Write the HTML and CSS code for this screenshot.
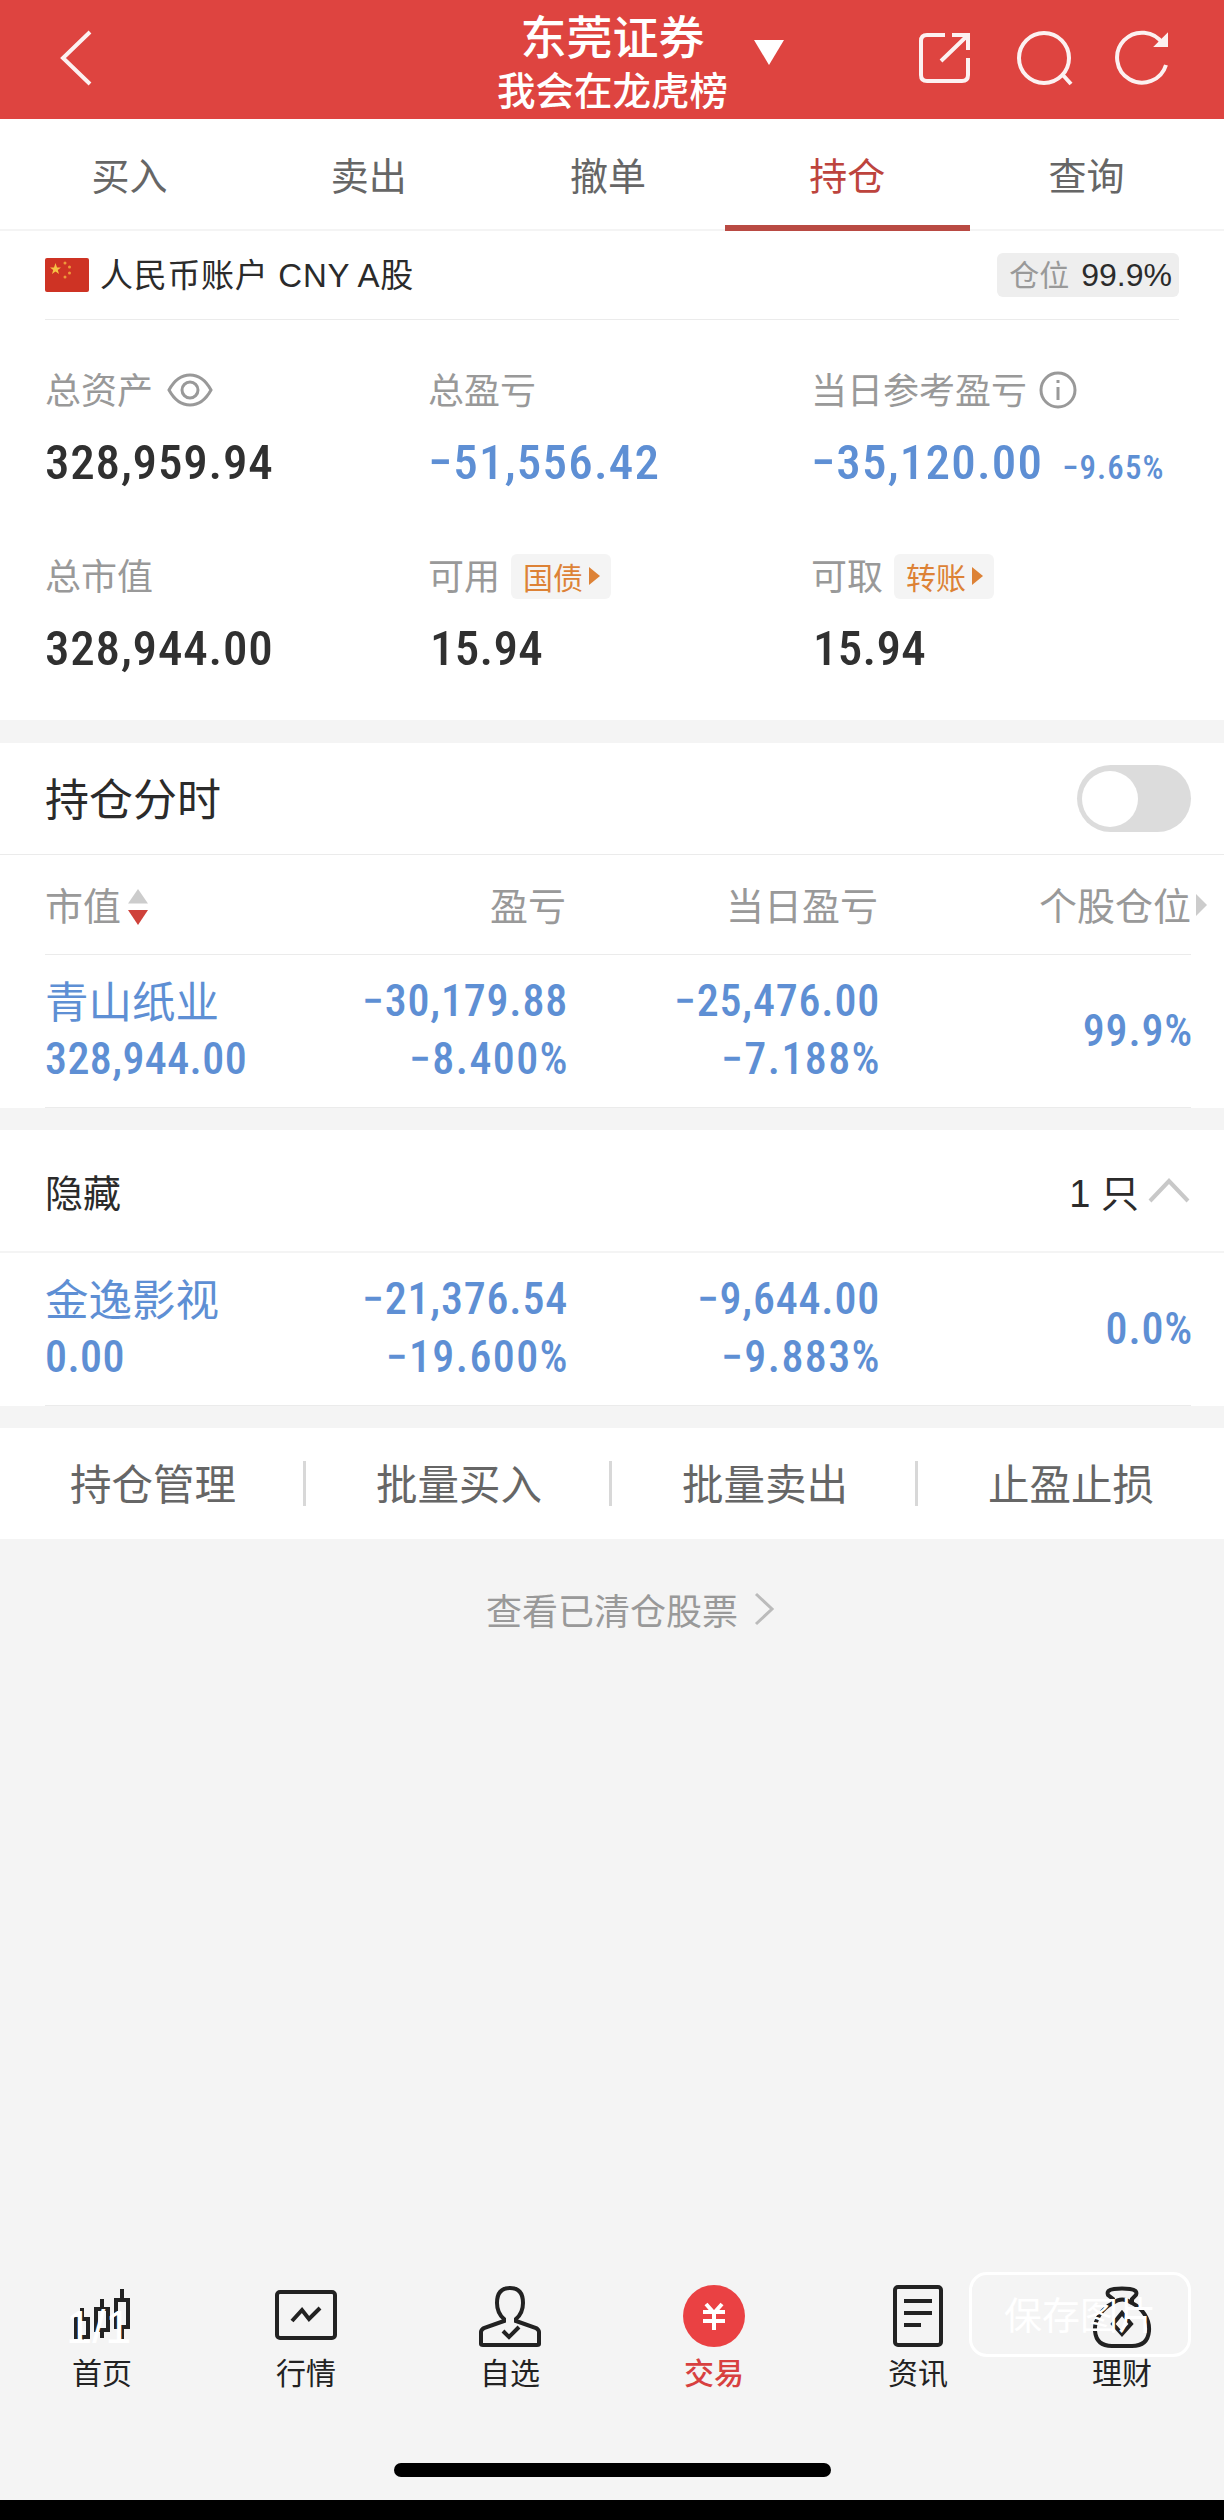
FILE: index.html
```html
<!DOCTYPE html>
<html lang="zh-CN">
<head>
  <meta charset="UTF-8">
  <meta name="viewport" content="width=device-width, initial-scale=1.0">
  <title>持仓 - 东莞证券</title>
  <link rel="stylesheet" href="styles.css">
</head>
<body>
  <header class="header">
    <svg class="back" width="32" height="58" viewBox="0 0 32 58"><path d="M30 3L3 29L30 55"/></svg>
    <div class="title">
      <h1>东莞证券</h1>
      <p>我会在龙虎榜</p>
    </div>
    <svg class="caret" width="36" height="30" viewBox="0 0 36 30"><path d="M3 2H33L18 27Z"/></svg>
    <div class="header-icons">
      <svg width="56" height="56" viewBox="0 0 56 56"><path d="M28 5H10Q4 5 4 11V45Q4 51 10 51H45Q51 51 51 45V28M35 5H51V20M51 5L24 31"/></svg>
      <svg width="60" height="60" viewBox="0 0 60 60"><circle cx="29" cy="30" r="25"/><path d="M47 46L56 56"/></svg>
      <svg width="56" height="60" viewBox="0 0 56 60"><path d="M51 37A25 25 0 1 1 48 16"/><path class="solid" d="M51 9V17H43Z"/></svg>
    </div>
  </header>

  <nav class="tabs">
    <a>买入</a>
    <a>卖出</a>
    <a>撤单</a>
    <a class="active">持仓</a>
    <a>查询</a>
  </nav>

  <section class="account">
    <div class="account-row">
      <svg class="flag" width="44" height="34" viewBox="0 0 44 34">
        <rect width="44" height="34" rx="2" fill="#ce3324"/>
        <path fill="#f6c244" d="M10.500 5L12 9.500H16L12.800 12L14 16L10.500 13.500L7 16L8.200 12L5 9.500H9Z"/>
        <g fill="#ee9a3a"><circle cx="20" cy="5" r="1.500"/><circle cx="24.500" cy="9" r="1.500"/><circle cx="24.500" cy="15" r="1.500"/><circle cx="20" cy="19" r="1.500"/></g>
      </svg>
      <span class="account-name">人民币账户 CNY A股</span>
      <span class="position"><em>仓位</em>99.9%</span>
    </div>

    <div class="summary">
      <div class="item">
        <div class="label"><span>总资产</span>
          <svg class="eye" width="46" height="36" viewBox="0 0 46 36"><path d="M2 18C8 7 15 3 23 3S38 7 44 18C38 29 31 33 23 33S8 29 2 18Z"/><circle cx="23" cy="18" r="8"/></svg>
        </div>
        <div class="value">328,959.94</div>
      </div>
      <div class="item">
        <div class="label"><span>总盈亏</span></div>
        <div class="value down">−51,556.42</div>
      </div>
      <div class="item">
        <div class="label"><span>当日参考盈亏</span>
          <svg class="info" width="38" height="38" viewBox="0 0 38 38"><circle cx="19" cy="19" r="17"/><path d="M19 16V29M19 9V12"/></svg>
        </div>
        <div class="value down">−35,120.00<small>−9.65%</small></div>
      </div>
      <div class="item">
        <div class="label"><span>总市值</span></div>
        <div class="value">328,944.00</div>
      </div>
      <div class="item">
        <div class="label"><span>可用</span><span class="tag">国债<i></i></span></div>
        <div class="value short">15.94</div>
      </div>
      <div class="item">
        <div class="label"><span>可取</span><span class="tag">转账<i></i></span></div>
        <div class="value short">15.94</div>
      </div>
    </div>
  </section>

  <section class="holdings">
    <div class="trend">
      <h2>持仓分时</h2>
      <span class="switch"></span>
    </div>
    <div class="row thead">
      <div>市值<svg class="sort" width="20" height="36" viewBox="0 0 20 36"><path fill="#ccc" d="M10 0L20 14.500H0Z"/><path fill="#cf423b" d="M0 21H20L10 36Z"/></svg></div>
      <div>盈亏</div>
      <div>当日盈亏</div>
      <div>个股仓位<i class="more"></i></div>
    </div>
    <div class="row stock">
      <div><b>青山纸业</b><span>328,944.00</span></div>
      <div><span>−30,179.88</span><span>−8.400%</span></div>
      <div><span>−25,476.00</span><span>−7.188%</span></div>
      <div><span>99.9%</span></div>
    </div>
  </section>

  <section class="hidden-list">
    <div class="hidden-head">
      <h3>隐藏</h3>
      <span class="count">1 只</span>
      <svg width="42" height="26" viewBox="0 0 42 26"><path d="M2 23L21 3L40 23"/></svg>
    </div>
    <div class="row stock">
      <div><b>金逸影视</b><span>0.00</span></div>
      <div><span>−21,376.54</span><span>−19.600%</span></div>
      <div><span>−9,644.00</span><span>−9.883%</span></div>
      <div><span>0.0%</span></div>
    </div>
  </section>

  <div class="actions">
    <a>持仓管理</a>
    <a>批量买入</a>
    <a>批量卖出</a>
    <a>止盈止损</a>
  </div>

  <a class="cleared">查看已清仓股票
    <svg width="22" height="34" viewBox="0 0 22 34"><path d="M3 2L19 17L3 32"/></svg>
  </a>

  <footer class="tabbar">
    <a>
      <svg width="64" height="64" viewBox="0 0 64 64"><path d="M12 24V35M12 53V59M6 35H18V53H6ZM32 15V25M32 46V54M26 25H38V46H26ZM52 5V16M52 43V55M46 16H58V43H46Z"/></svg>
      首页
    </a>
    <a>
      <svg width="64" height="64" viewBox="0 0 64 64"><rect x="3" y="8" width="58" height="46" rx="3"/><path d="M18 37L28 26L35 35L46 24"/></svg>
      行情
    </a>
    <a>
      <svg width="64" height="64" viewBox="0 0 64 64"><path d="M26 35Q19 29 19 19Q19 4 32 4T45 19Q45 29 38 35V37L58 44Q61 46 61 48V60Q61 61 59 61H5Q3 61 3 60V48Q3 46 6 44L26 37ZM25 47L31 53L41 43"/></svg>
      自选
    </a>
    <a class="active">
      <svg width="64" height="64" viewBox="0 0 64 64"><circle cx="32" cy="32" r="31"/><path d="M24 20L32 29L40 20M21 28H43M21 37H43M32 28V46"/></svg>
      交易
    </a>
    <a>
      <svg width="64" height="64" viewBox="0 0 64 64"><rect x="9" y="3" width="46" height="58" rx="3"/><path d="M18 17H46M18 29H46M18 41H35"/></svg>
      资讯
    </a>
    <a>
      <svg width="64" height="64" viewBox="0 0 64 64"><path d="M23 19V15L18 11Q16 6 24 5Q32 4 40 5Q48 6 46 11L42 15V19M23 19Q32 12 42 19C52 24 60 35 59 47C58 58 51 62 42 62H22C13 62 6 58 5 47C4 35 13 24 23 19ZM32 29L41 40L32 50L23 40Z"/></svg>
      理财
    </a>
    <span class="page-no">1/1</span>
    <button class="save">保存图片</button>
  </footer>
  <div class="home-bar"></div>
</body>
</html>
```
FILE: styles.css
```css
* {
  box-sizing: border-box;
}
body {
  margin: 0;
  width: 1224px;
  height: 2520px;
  display: flex;
  flex-direction: column;
  background: #f4f4f4;
  border-bottom: 20px solid #000;
  font-family: 'Liberation Sans', 'Noto Sans CJK SC', sans-serif;
  color: #2b2b2b;
}
h1, h2, h3, p {
  margin: 0;
  font-weight: 400;
}
svg {
  display: block;
  flex: none;
  fill: none;
}

/* header */
.header {
  height: 119px;
  flex: none;
  display: grid;
  grid-template-columns: 497px 231px 1fr auto;
  align-items: center;
  background: #de4440;
  color: #fff;
}
.header svg {
  stroke: #fff;
  stroke-width: 4;
  opacity: 0.93;
}
.header .back {
  margin: -4px 0 0 60px;
}
.title {
  text-align: center;
  white-space: nowrap;
}
.title h1 {
  font-size: 46px;
  line-height: 58px;
  font-weight: 500;
  padding-top: 6px;
}
.title p {
  font-size: 38.5px;
  line-height: 50px;
  font-weight: 500;
}
.header .caret {
  fill: #fff;
  stroke: none;
  opacity: 1;
  margin: -14px 0 0 23px;
}
.header-icons {
  display: flex;
  align-items: center;
  gap: 42px;
  padding: 0 53px 3px 0;
}
.header-icons svg:last-child {
  margin-left: -2px;
}
.header-icons .solid {
  fill: #fff;
}

/* trade tabs */
.tabs {
  height: 112px;
  flex: none;
  display: flex;
  padding: 0 18px 0 10px;
  background: #fff;
  border-bottom: 2px solid #f4f4f4;
}
.tabs a {
  flex: 1;
  position: relative;
  font-size: 38px;
  line-height: 116px;
  text-align: center;
  color: #666;
}
.tabs .active {
  color: #bd443d;
}
.tabs .active::after {
  content: '';
  position: absolute;
  left: -3px;
  right: -3px;
  bottom: -2px;
  height: 6px;
  background: #b94a43;
}

/* account */
.account {
  height: 489px;
  flex: none;
  padding: 0 45px;
  background: #fff;
}
.account-row {
  height: 89px;
  display: flex;
  align-items: center;
  border-bottom: 1px solid #ebebeb;
}
.account-name {
  font-size: 33px;
  letter-spacing: 0.7px;
  margin: -4px 0 0 11px;
}
.position {
  margin-left: auto;
  height: 44px;
  padding: 0 7px 0 12px;
  border-radius: 6px;
  background: #eee;
  font-size: 32px;
  line-height: 44px;
}
.position em {
  font-style: normal;
  font-size: 30px;
  color: #999;
  margin-right: 12px;
}
.summary {
  display: grid;
  grid-template-columns: 383px 383px 1fr;
  grid-auto-rows: 186px;
  padding-top: 44px;
}
.item {
  white-space: nowrap;
}
.label {
  display: flex;
  align-items: center;
  height: 52px;
  font-size: 36px;
  color: #999;
}
.label span:first-child {
  margin-top: -4px;
}
.label svg {
  stroke: #999;
  stroke-width: 3;
}
.label .eye {
  margin-left: 14px;
}
.label .info {
  margin-left: 12px;
}
.value {
  font-family: Roboto, sans-serif;
  font-weight: 550;
  font-stretch: 87%;
  font-size: 49px;
  line-height: 60px;
  letter-spacing: 0.8px;
  margin-top: 17px;
  color: #303030;
}
.value.short {
  padding-left: 2px;
  letter-spacing: 0.3px;
}
.value.down {
  color: #5e8fd4;
  letter-spacing: 1.2px;
}
.value small {
  font-size: 33px;
  font-weight: 500;
  letter-spacing: 1.1px;
  margin-left: 19px;
}
.tag {
  display: flex;
  align-items: center;
  height: 45px;
  margin-left: 11px;
  padding: 0 11px 0 12px;
  border-radius: 6px;
  background: #f4f4f4;
  font-size: 30px;
  color: #dd8236;
}
.tag i {
  margin-left: 6px;
  border: 9px solid transparent;
  border-left: 11px solid #dd8236;
  border-right: 0;
}

/* holdings */
.holdings {
  height: 365px;
  flex: none;
  margin-top: 23px;
  background: #fff;
}
.trend {
  height: 112px;
  display: flex;
  align-items: center;
  justify-content: space-between;
  padding: 0 33px 0 45px;
  border-bottom: 1px solid #ebebeb;
}
.trend h2 {
  font-size: 44px;
  margin-top: -4px;
}
.switch {
  width: 114px;
  height: 67px;
  padding: 6px 5px;
  border-radius: 34px;
  background: #dcdcdc;
}
.switch::before {
  content: '';
  display: block;
  width: 56px;
  height: 56px;
  border-radius: 50%;
  background: #fff;
}
.row {
  display: grid;
  grid-template-columns: 220px 301px 312px 1fr;
  margin: 0 33px 0 45px;
  border-bottom: 1px solid #ebebeb;
  text-align: right;
}
.row > div:first-child {
  text-align: left;
}
.thead {
  height: 100px;
  line-height: 104px;
  font-size: 38px;
  color: #999;
}
.thead > div:first-child {
  display: flex;
  align-items: center;
}
.sort {
  margin-left: 7px;
}
.thead > div:last-child {
  position: relative;
}
.more {
  position: absolute;
  right: -16px;
  top: 39px;
  border: 11px solid transparent;
  border-left: 11px solid #ccc;
  border-right: 0;
}
.stock {
  height: 153px;
  padding-top: 17px;
  color: #5e8fd4;
}
.stock > div {
  display: flex;
  flex-direction: column;
}
.stock > div:last-child {
  padding-top: 30px;
}
.stock b {
  font-size: 43.5px;
  line-height: 62px;
  height: 58px;
  font-weight: 400;
}
.stock span {
  font-family: Roboto, sans-serif;
  font-weight: 550;
  font-stretch: 87%;
  font-size: 44px;
  line-height: 58px;
  letter-spacing: 0.8px;
  margin-right: -2px;
}
.stock b + span {
  letter-spacing: 0.4px;
}
.stock span + span {
  letter-spacing: 1.4px;
  margin-right: -3px;
}

/* hidden stocks */
.hidden-list {
  height: 276px;
  flex: none;
  margin-top: 22px;
  background: #fff;
}
.hidden-head {
  height: 123px;
  display: flex;
  align-items: center;
  padding: 0 34px 0 45px;
  border-bottom: 2px solid #f4f4f4;
  font-size: 38px;
}
.hidden-head h3 {
  font-size: 38px;
}
.count {
  margin-left: auto;
}
.hidden-head svg {
  margin-left: 9px;
  stroke: #c8c8c8;
  stroke-width: 4;
}

/* bottom actions */
.actions {
  height: 111px;
  flex: none;
  margin-top: 22px;
  display: flex;
  align-items: center;
  background: #fff;
}
.actions a {
  flex: 1;
  height: 45px;
  padding-left: 3px;
  line-height: 49px;
  font-size: 41.5px;
  text-align: center;
  color: #666;
  border-right: 3px solid #d8d8d8;
}
.actions a:last-child {
  border-right-color: transparent;
}
.cleared {
  display: flex;
  align-items: center;
  justify-content: center;
  margin-top: 44px;
  padding-left: 37px;
  font-size: 36px;
  color: #999;
}
.cleared svg {
  margin-left: 15px;
  stroke: #bbb;
  stroke-width: 3;
}

/* app tab bar */
.tabbar {
  position: relative;
  flex: none;
  display: flex;
  height: 216px;
  margin-top: auto;
}
.tabbar a {
  flex: 1;
  display: flex;
  flex-direction: column;
  align-items: center;
  font-size: 30px;
  line-height: 50px;
  color: #222;
}
.tabbar svg {
  margin: 0 0 1px;
  stroke: #222;
  stroke-width: 4;
}
.tabbar .active {
  color: #d8403f;
  font-weight: 500;
}
.tabbar .active svg {
  stroke: #fff;
}
.tabbar .active circle {
  fill: #ea4143;
  stroke: none;
}
/* image viewer overlay */
.page-no {
  position: absolute;
  left: 66px;
  top: 16px;
  font-size: 47px;
  line-height: 54px;
  color: #fff;
}
.save {
  position: absolute;
  left: 969px;
  top: -12px;
  width: 222px;
  height: 85px;
  padding: 0 0 4px;
  border: 3px solid #fff;
  border-radius: 18px;
  background: none;
  font: 38px 'Noto Sans CJK SC', sans-serif;
  color: #fff;
}
.home-bar {
  flex: none;
  width: 437px;
  height: 14px;
  margin: -37px auto 23px;
  border-radius: 7px;
  background: #000;
}
```
